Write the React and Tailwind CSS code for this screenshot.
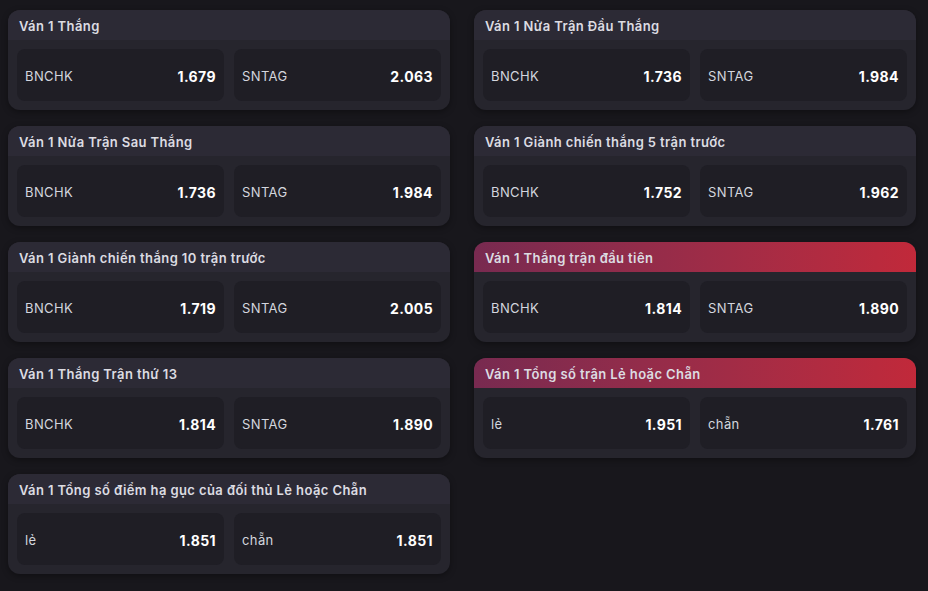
const markets = [
  { title: "Ván 1 Thắng", odds: [["BNCHK", "1.679"], ["SNTAG", "2.063"]] },
  { title: "Ván 1 Nửa Trận Đầu Thắng", odds: [["BNCHK", "1.736"], ["SNTAG", "1.984"]] },
  { title: "Ván 1 Nửa Trận Sau Thắng", odds: [["BNCHK", "1.736"], ["SNTAG", "1.984"]] },
  { title: "Ván 1 Giành chiến thắng 5 trận trước", odds: [["BNCHK", "1.752"], ["SNTAG", "1.962"]] },
  { title: "Ván 1 Giành chiến thắng 10 trận trước", odds: [["BNCHK", "1.719"], ["SNTAG", "2.005"]] },
  { title: "Ván 1 Thắng trận đầu tiên", hot: true, odds: [["BNCHK", "1.814"], ["SNTAG", "1.890"]] },
  { title: "Ván 1 Thắng Trận thứ 13", odds: [["BNCHK", "1.814"], ["SNTAG", "1.890"]] },
  { title: "Ván 1 Tổng số trận Lẻ hoặc Chẵn", hot: true, odds: [["lẻ", "1.951"], ["chẵn", "1.761"]] },
  { title: "Ván 1 Tổng số điểm hạ gục của đối thủ Lẻ hoặc Chẵn", odds: [["lẻ", "1.851"], ["chẵn", "1.851"]] },
];

const MarketCard = ({ title, odds, hot }) => (
  <div className="rounded-[12px] overflow-hidden bg-[#26252d] shadow-[0_2px_6px_rgba(0,0,0,0.35)]">
    <div
      className={
        hot
          ? "h-[30px] px-[11px] pt-[3px] flex items-center bg-gradient-to-r from-[#782a50] to-[#c1293a]"
          : "h-[30px] px-[11px] pt-[3px] flex items-center bg-[#2c2a35]"
      }
    >
      <span className="text-[13px] font-semibold tracking-[0.4px] text-[#dcdce2]">{title}</span>
    </div>
    <div className="grid grid-cols-2 gap-[10px] p-[9px]">
      {odds.map(([label, value]) => (
        <div
          key={label}
          className="h-[52px] rounded-[8px] bg-[#1f1e25] px-[8px] flex items-center justify-between"
        >
          <span className="mt-[4px] text-[13px] tracking-[0.4px] text-[#d3d6de]">{label}</span>
          <span className="mt-[2px] text-[14px] font-bold tracking-[0.4px] text-white">{value}</span>
        </div>
      ))}
    </div>
  </div>
);

export default function App() {
  return (
    <div
      className="min-h-[591px] bg-[#18171c] px-[8px] pt-[10px] pb-[16px]"
      style={{ fontFamily: "Inter, 'Noto Sans', sans-serif" }}
    >
      <div className="grid grid-cols-2 gap-x-[24px] gap-y-[16px] w-[908px] items-start">
        {markets.map((m) => (
          <MarketCard key={m.title} {...m} />
        ))}
      </div>
    </div>
  );
}
